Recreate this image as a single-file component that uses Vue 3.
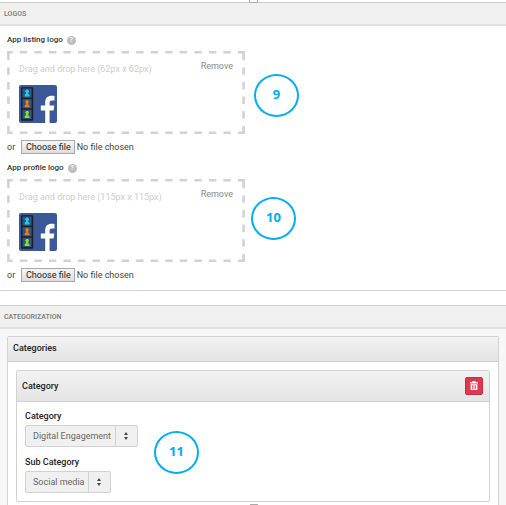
<script setup>
import { ref } from 'vue'

const uploads = [
  { id: 'listing', label: 'App listing logo', size: '62px x 62px' },
  { id: 'profile', label: 'App profile logo', size: '115px x 115px' },
]
const fields = [
  { id: 'category', label: 'Category', options: ['Digital Engagement'] },
  { id: 'sub-category', label: 'Sub Category', options: ['Social media'] },
]
const people = [
  { y: 3, color: '#12d3ee' },
  { y: 13.7, color: '#ee7a17' },
  { y: 24.4, color: '#7ee61c' },
]
const inputs = ref([])
const choose = (i) => inputs.value[i].click()
</script>

<template>
  <main class="page">
    <span class="handle handle-top"></span>
    <span class="handle handle-bottom"></span>

    <section class="logos">
      <h2 class="bar">LOGOS</h2>
      <div class="uploads">
        <div v-for="(u, i) in uploads" :key="u.id" class="upload">
          <div class="upload-title">
            <label :for="u.id">{{ u.label }}</label>
            <span class="help">?</span>
          </div>
          <div class="drop">
            <svg class="dashes" viewBox="0 0 238 83" preserveAspectRatio="none" fill="none" stroke="#d2d2d2" stroke-width="2.6" aria-hidden="true">
              <path d="M0 1.3H238M0 81.7H238" stroke-dasharray="7.4 7.14" stroke-dashoffset="1.7" />
              <path d="M1.4 1.8V83M236.6 1.8V83" stroke-dasharray="7.4 7.2" />
              <path d="M1.4 0V3M236.6 0V3" />
            </svg>
            <div class="drop-head">
              <span class="hint">Drag and drop here ({{ u.size }})</span>
              <button class="remove" type="button">Remove</button>
            </div>
            <svg class="logo" viewBox="0 0 38 38" aria-hidden="true">
              <rect width="38" height="38" rx="2" fill="#3b5998" />
              <path d="M26.2 38V25.5h-4.4v-5h4.4v-3.2c0-4.4 2.6-6.5 6.5-6.5 1.3 0 2.3.1 2.8.2v4.6h-2.3c-2 0-2.6 1-2.6 2.5v2.4h4.7l-.7 5h-4V38z" fill="#fff" />
              <rect x="2" y="2.2" width="12.2" height="33.6" rx=".8" fill="#1c2028" />
              <g v-for="p in people" :key="p.y">
                <rect x="3.5" :y="p.y + 0.4" width="9.2" height="9.2" fill="#36507f" />
                <circle cx="8.1" :cy="p.y + 3.2" r="1.8" :fill="p.color" />
                <path :d="`M7 ${p.y + 4}h2.2v1.8l1.3 .9v1.8H5.7v-1.8l1.3-.9z`" :fill="p.color" />
              </g>
            </svg>
          </div>
          <div class="file-row">
            <span class="or">or</span>
            <button class="choose" type="button" @click="choose(i)">Choose file</button>
            <span>No file chosen</span>
            <input :id="u.id" ref="inputs" type="file" hidden />
          </div>
        </div>
      </div>
    </section>

    <section class="categorization">
      <h2 class="bar">CATEGORIZATION</h2>
      <div class="outer panel">
        <h3 class="panel-head">Categories</h3>
        <div class="panel inner">
          <div class="panel-head inner-head">
            <h4>Category</h4>
            <button class="delete" type="button" aria-label="Delete">
              <svg viewBox="0 0 8 10" aria-hidden="true">
                <path d="M2.5 1.2V0h3v1.2H8v1.4H0V1.2zM.6 3.2h6.8V9H.6z" fill="#fff" />
                <path d="M2.5 4.2v3.8M4 4.2v3.8M5.5 4.2v3.8" stroke="#dc3850" stroke-width=".7" />
              </svg>
            </button>
          </div>
          <div class="fields">
            <div v-for="f in fields" :key="f.id" class="field">
              <label :for="f.id">{{ f.label }}</label>
              <div class="select">
                <select :id="f.id">
                  <option v-for="o in f.options" :key="o">{{ o }}</option>
                </select>
                <svg class="arrows" viewBox="0 0 4 8" aria-hidden="true">
                  <path d="M0 3L2 0l2 3zM0 5l2 3 2-3z" fill="#444" />
                </svg>
              </div>
            </div>
          </div>
        </div>
      </div>
    </section>

    <span class="callout nine">9</span>
    <span class="callout ten">10</span>
    <span class="callout eleven">11</span>
  </main>
</template>

<style>
body { margin: 0; background: #fff; }
</style>

<style scoped>
* { box-sizing: border-box; }
h2, h3, h4 { margin: 0; }
button, select { font: inherit; }
.page {
  position: relative;
  display: flex;
  flex-direction: column;
  min-height: 100vh;
  padding-top: 2px;
  font: 9px/12px Roboto, sans-serif;
  color: #555;
}
.bar {
  height: 24px;
  padding-left: 4px;
  border-top: 1px solid #cfcfcf;
  border-bottom: 2px solid #e0e0e0;
  background: #f0f0f0;
  font-size: 7px;
  line-height: 22px;
  font-weight: 500;
  color: #777;
}
.logos { border-bottom: 1px solid #d4d4d4; }
.uploads {
  display: flex;
  flex-direction: column;
  gap: 8px;
  padding: 8px 7px;
}
.upload-title {
  display: flex;
  align-items: center;
  gap: 4px;
  height: 12px;
  font-size: 8px;
  font-weight: 500;
  color: #333;
}
.help {
  width: 9px;
  height: 9px;
  border-radius: 50%;
  background: #bdbdbd;
  color: #fff;
  font-size: 7px;
  line-height: 9px;
  text-align: center;
}
.drop {
  position: relative;
  max-width: 238px;
  height: 83px;
  margin-top: 5px;
  padding: 9px 12px 0;
}
.dashes {
  position: absolute;
  inset: 0;
  width: 100%;
  height: 100%;
}
.drop-head {
  position: relative;
  display: flex;
  justify-content: space-between;
}
.hint { padding-top: 3px; color: #cdcdcd; }
.remove {
  height: 12px;
  padding: 0;
  border: 0;
  background: none;
  color: #888;
}
.logo {
  position: relative;
  display: block;
  width: 38px;
  height: 38px;
  margin-top: 10px;
}
.file-row {
  display: flex;
  align-items: center;
  height: 14px;
  margin-top: 6px;
  color: #444;
}
.or { width: 14px; }
.choose {
  height: 14px;
  margin-right: 2px;
  padding: 0 3px 0 4px;
  border: 1px solid #a8a8a8;
  background: linear-gradient(#f6f6f6, #dedede);
  line-height: 12px;
  color: #222;
}
.categorization {
  display: flex;
  flex: 1;
  flex-direction: column;
  margin-top: 14px;
  background: #f7f7f7;
}
.panel {
  border: 1px solid #d2d2d2;
  border-radius: 2px;
  background: #fff;
}
.outer {
  flex: 1;
  margin: 7px 7px 0;
  border-bottom: 0;
  border-radius: 2px 2px 0 0;
}
.panel-head {
  height: 25px;
  padding-left: 5px;
  border-bottom: 1px solid #cfcfcf;
  background: linear-gradient(#f2f2f2, #e4e4e4);
  font-size: 9px;
  line-height: 23px;
  font-weight: 500;
  color: #222;
}
.inner { margin: 8px 8px 0; }
.inner-head {
  display: flex;
  align-items: center;
  justify-content: space-between;
  height: 31px;
  padding-right: 6px;
}
.inner-head h4 { font: inherit; }
.delete {
  display: grid;
  place-items: center;
  width: 18px;
  height: 18px;
  padding: 0;
  border: 1px solid #c42f45;
  border-radius: 2px;
  background: #dc3850;
}
.delete svg { width: 8px; height: 10px; }
.fields {
  display: flex;
  flex-direction: column;
  gap: 9px;
  padding: 8px;
}
.field label {
  display: block;
  margin-bottom: 3px;
  font-weight: 500;
  color: #222;
}
.select {
  position: relative;
  display: inline-block;
  vertical-align: top;
}
select {
  display: block;
  height: 22px;
  padding: 0 25px 0 7px;
  appearance: none;
  border: 1px solid #d2d2d2;
  border-radius: 2px;
  background: linear-gradient(#d2d2d2, #d2d2d2) right 21px top / 1px 100% no-repeat #f0f0f0;
  color: #666;
}
.arrows {
  position: absolute;
  top: 7px;
  right: 10px;
  width: 4px;
  height: 8px;
  pointer-events: none;
}
.callout {
  position: absolute;
  width: 45px;
  height: 43px;
  border: 2px solid #00adef;
  border-radius: 50%;
  font: bold 13px/36px "Open Sans", sans-serif;
  text-align: center;
  color: #00adef;
}
.nine { left: 254px; top: 74px; }
.ten { left: 251px; top: 197px; }
.eleven { left: 154px; top: 431px; }
.handle {
  position: absolute;
  left: 50%;
  border: 1px solid #aaa;
}
.handle-top { top: 0; width: 9px; height: 3px; margin-left: -4px; border-top: 0; background: #fff; }
.handle-bottom { bottom: 0; width: 8px; height: 1px; margin-left: -3px; border-width: 1px 0 0; }
</style>
